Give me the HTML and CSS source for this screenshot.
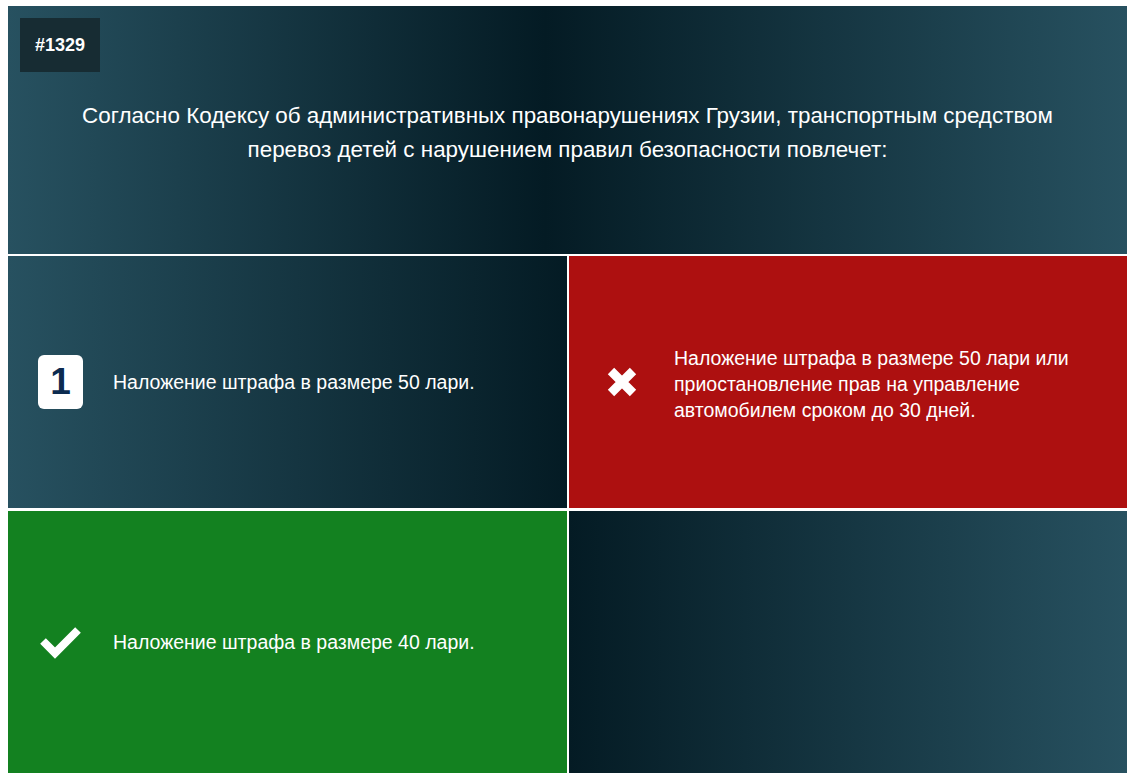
FILE: index.html
```html
<!DOCTYPE html>
<html lang="ru">
<head>
<meta charset="utf-8">
<link rel="stylesheet" href="styles.css">
</head>
<body>
<div class="page">
  <section class="question">
    <div class="badge">#1329</div>
    <p class="question-text">Согласно Кодексу об административных правонарушениях Грузии, транспортным средством перевоз детей с нарушением правил безопасности повлечет:</p>
  </section>
  <div class="answers">
    <div class="answer answer-dark-l">
      <div class="icon"><span class="num">1</span></div>
      <div class="text">Наложение штрафа в размере 50 лари.</div>
    </div>
    <div class="answer answer-wrong">
      <div class="icon">
        <svg width="32" height="32" viewBox="0 0 32 32"><path d="M5 5 L27 27 M27 5 L5 27" stroke="#fff" stroke-width="9" stroke-linecap="butt"/></svg>
      </div>
      <div class="text text-multi">Наложение штрафа в размере 50 лари или приостановление прав на управление автомобилем сроком до 30 дней.</div>
    </div>
    <div class="answer answer-right">
      <div class="icon">
        <svg width="42" height="34" viewBox="0 0 42 34"><polyline points="3,16 15,28 38,5" fill="none" stroke="#fff" stroke-width="8" stroke-linecap="butt" stroke-linejoin="miter"/></svg>
      </div>
      <div class="text">Наложение штрафа в размере 40 лари.</div>
    </div>
    <div class="answer answer-dark-r"></div>
  </div>
</div>
</body>
</html>
```

FILE: styles.css
```css
html, body {
  margin: 0;
  padding: 0;
  background: #fff;
  overflow: hidden;
}
body {
  font-family: "Liberation Sans", Arial, sans-serif;
  color: #fff;
}
.page {
  padding: 6px 3px 0 8px;
  display: flex;
  flex-direction: column;
  gap: 2px;
}
.question {
  height: 248px;
  box-sizing: border-box;
  padding: 12px 12px;
  background: linear-gradient(90deg, #275160 0%, #041b24 48%, #275160 100%);
}
.badge {
  display: inline-block;
  width: 80px;
  height: 54px;
  line-height: 54px;
  text-align: center;
  background: #172c33;
  font-weight: bold;
  font-size: 18px;
}
.question-text {
  margin: 27px auto 0;
  max-width: 1010px;
  text-align: center;
  font-size: 22.4px;
  line-height: 33.6px;
}
.answers {
  display: grid;
  grid-template-columns: 559px 558px;
  grid-template-rows: 252px 262px;
  column-gap: 2px;
  row-gap: 3px;
}
.answer {
  display: flex;
  align-items: center;
  padding: 0 30px 0 30px;
  gap: 30px;
}
.answer-dark-l {
  background: linear-gradient(90deg, #275160 0%, #041b24 100%);
}
.answer-dark-r {
  background: linear-gradient(90deg, #041b24 0%, #275160 100%);
}
.answer-wrong {
  background: #ad1010;
}
.answer-right {
  background: #138120;
}
.icon {
  flex: 0 0 45px;
  display: flex;
  justify-content: center;
  align-items: center;
}
.num {
  display: block;
  width: 45px;
  height: 54px;
  line-height: 54px;
  background: #fff;
  border-radius: 6px;
  text-align: center;
  color: #0c2b50;
  font-weight: bold;
  font-size: 37px;
}
.text {
  font-size: 19.5px;
  line-height: 26.3px;
}
.text-multi {
  padding-top: 4px;
}
```
